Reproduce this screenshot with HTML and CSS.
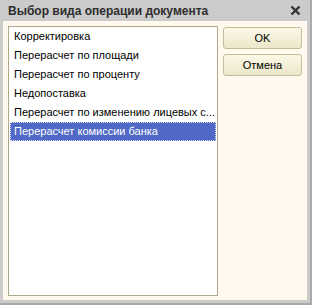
FILE: index.html
```html
<!DOCTYPE html>
<html lang="ru">

<head>
    <meta charset="UTF-8">
    <title>Выбор вида операции документа</title>
    <link rel="stylesheet" href="styles.css">
</head>

<body>
    <div class="window">
        <div class="titlebar">
            <span class="title">Выбор вида операции документа</span>
            <svg class="close" width="11" height="11" viewBox="0 0 11 11">
                <path d="M1.5 1.5 L9.5 9.5 M9.5 1.5 L1.5 9.5" stroke="#333" stroke-width="2.4" />
            </svg>
        </div>
        <div class="content">
            <ul class="list">
                <li class="list-item">Корректировка</li>
                <li class="list-item">Перерасчет по площади</li>
                <li class="list-item">Перерасчет по проценту</li>
                <li class="list-item">Недопоставка</li>
                <li class="list-item">Перерасчет по изменению лицевых с...</li>
                <li class="list-item selected">Перерасчет комиссии банка</li>
            </ul>
            <div class="buttons">
                <button class="btn">OK</button>
                <button class="btn">Отмена</button>
            </div>
        </div>
    </div>
</body>

</html>
```

FILE: styles.css
```css
body {
    margin: 0;
    padding: 0;
    font-family: "Liberation Sans", Arial, sans-serif;
}

.window {
    width: 312px;
    height: 305px;
    box-sizing: border-box;
    background-color: #cbcbcb;
    border-right: 2px solid #a9a9a9;
    border-bottom: 2px solid #a9a9a9;
    display: flex;
    flex-direction: column;
}

.titlebar {
    height: 21px;
    display: flex;
    align-items: center;
    justify-content: space-between;
    padding: 0 9px 0 8px;
}

.title {
    font-size: 12px;
    font-weight: bold;
    color: #2e2e2e;
}

.close {
    display: block;
}

.content {
    flex: 1;
    margin: 0 3px 3px 3px;
    background-color: #fffaed;
    display: flex;
    padding: 5px 5px 4px 5px;
    gap: 5px;
}

.list {
    margin: 0;
    padding: 0;
    list-style: none;
    width: 210px;
    box-sizing: border-box;
    border: 1px solid #aba88c;
    background-color: #fff;
    padding: 0 1px;
}

.list-item {
    height: 19px;
    line-height: 19px;
    font-size: 11px;
    padding-left: 4px;
    color: #000;
    white-space: nowrap;
    overflow: hidden;
}

.selected {
    background-color: #5069c7;
    color: #fff;
    outline: 1px dotted #dfe4f7;
    outline-offset: -1px;
}

.buttons {
    display: flex;
    flex-direction: column;
    gap: 5px;
    padding-top: 1px;
}

.btn {
    width: 79px;
    height: 22px;
    font-family: "Liberation Sans", Arial, sans-serif;
    font-size: 11px;
    color: #000;
    background: linear-gradient(#fbf8e8, #ece7c9);
    border: 1px solid #c2bd9b;
    border-radius: 3px;
    padding: 0;
}
```
